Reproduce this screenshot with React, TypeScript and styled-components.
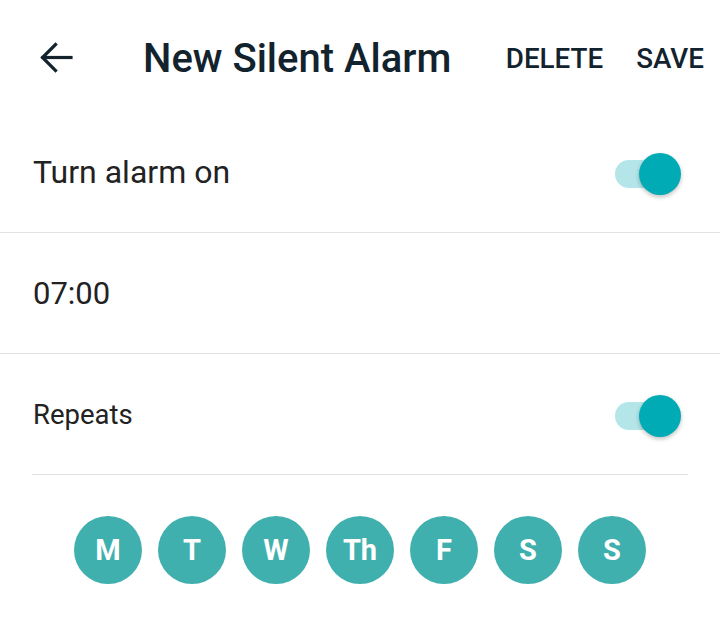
import React from "react";
import styled, { createGlobalStyle } from "styled-components";

const Global = createGlobalStyle`
  html, body { margin: 0; padding: 0; background: #ffffff; }
  body { font-family: Roboto, "Noto Sans", "Liberation Sans", sans-serif; -webkit-font-smoothing: antialiased; }
`;

const Page = styled.div`
  width: 720px;
  height: 620px;
  background: #ffffff;
  display: flex;
  flex-direction: column;
`;

const Header = styled.header`
  height: 112px;
  display: flex;
  align-items: center;
  padding: 4px 16px 0 40px;
  box-sizing: border-box;
  color: #13232e;
`;

const BackButton = styled.button`
  border: 0;
  background: none;
  padding: 0;
  width: 33px;
  height: 32px;
  display: flex;
  align-items: center;
  justify-content: center;
  color: #13232e;
  margin-top: -1px;
`;

const Title = styled.h1`
  margin: 0 0 0 70px;
  font-size: 40px;
  font-weight: 500;
  flex: 1;
  letter-spacing: 0;
`;

const Action = styled.button<{ $gap: number }>`
  border: 0;
  background: none;
  padding: 0;
  font-family: inherit;
  font-size: 27.8px;
  font-weight: 500;
  color: #13232e;
  margin-left: ${(p) => p.$gap}px;
  letter-spacing: 0;
`;

const Row = styled.div<{ $inset?: boolean }>`
  height: 120px;
  display: flex;
  align-items: center;
  justify-content: space-between;
  border-bottom: 1px solid #e2e2e2;
  box-sizing: content-box;
  ${(p) => (p.$inset ? "margin: 0 32px; padding: 0;" : "padding: 0 32px;")}
`;

const Label = styled.span<{ $size: number }>`
  font-size: ${(p) => p.$size}px;
  color: #222222;
  margin-left: 1px;
`;

const SwitchTrack = styled.div<{ $edge: number }>`
  position: relative;
  width: 58px;
  height: 28px;
  border-radius: 14px;
  background: #b3e5e9;
  margin-right: ${(p) => p.$edge}px;
  margin-top: 3px;
`;

const SwitchKnob = styled.div`
  position: absolute;
  right: -8px;
  top: -7px;
  width: 42px;
  height: 42px;
  border-radius: 50%;
  background: #00abb5;
  box-shadow: 0 2px 4px rgba(0, 0, 0, 0.25);
`;

const Days = styled.div`
  display: flex;
  justify-content: center;
  gap: 16px;
  padding-top: 41px;
`;

const Day = styled.div`
  width: 68px;
  height: 68px;
  border-radius: 50%;
  background: #3fb0ae;
  color: #ffffff;
  font-size: 29px;
  font-weight: 700;
  display: flex;
  align-items: center;
  justify-content: center;
`;

const Switch = ({ edge }: { edge: number }) => (
  <SwitchTrack $edge={edge}>
    <SwitchKnob />
  </SwitchTrack>
);

export default function App() {
  const days = ["M", "T", "W", "Th", "F", "S", "S"];
  return (
    <Page>
      <Global />
      <Header>
        <BackButton aria-label="Back">
          <svg width="33" height="31" viewBox="0 0 33 31" fill="none" stroke="currentColor" strokeWidth="3.2" strokeLinecap="square">
            <path d="M31 15.5H3" />
            <path d="M15.5 2.5L2.5 15.5L15.5 28.5" />
          </svg>
        </BackButton>
        <Title>New Silent Alarm</Title>
        <Action $gap={0}>DELETE</Action>
        <Action $gap={33}>SAVE</Action>
      </Header>
      <Row>
        <Label $size={32}>Turn alarm on</Label>
        <Switch edge={15} />
      </Row>
      <Row>
        <Label $size={31}>07:00</Label>
      </Row>
      <Row $inset>
        <Label $size={27.5}>Repeats</Label>
        <Switch edge={15} />
      </Row>
      <Days>
        {days.map((d, i) => (
          <Day key={i}>{d}</Day>
        ))}
      </Days>
    </Page>
  );
}
